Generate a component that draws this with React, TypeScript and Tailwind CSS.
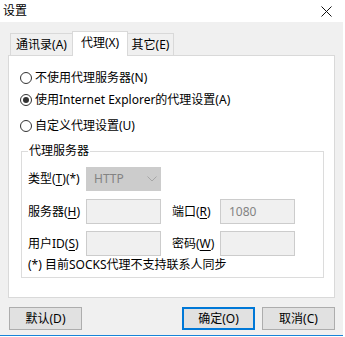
import { ReactNode } from 'react'

// ─── Sub-components ───────────────────────────────────────────────────────────

function Radio({ checked, children }: { checked?: boolean; children: ReactNode }) {
  return (
    <div className="flex items-center h-[16px]">
      <span className="w-[12px] h-[12px] rounded-full border border-[#333333] bg-white flex items-center justify-center shrink-0">
        {checked && <span className="w-[6px] h-[6px] rounded-full bg-[#333333]" />}
      </span>
      <span className="ml-[3px]">{children}</span>
    </div>
  )
}

function Key({ k }: { k: string }) {
  return <span className="underline underline-offset-2">{k}</span>
}

function Field({ value }: { value?: string }) {
  return (
    <div className="w-[75px] h-[25px] shrink-0 border border-[#cccccc] bg-[#f0f0f0] flex items-center pl-[8px] text-[#838383]">
      {value}
    </div>
  )
}

function Button({ primary, children }: { primary?: boolean; children: ReactNode }) {
  return (
    <div
      className={
        primary
          ? 'w-[73px] h-[23px] border-2 border-[#0078d7] bg-[#e1e1e1] flex items-center justify-center'
          : 'w-[73px] h-[23px] border border-[#adadad] bg-[#e1e1e1] flex items-center justify-center'
      }
    >
      {children}
    </div>
  )
}

// ─── App ──────────────────────────────────────────────────────────────────────

export default function App() {
  return (
    <div
      className="w-[345px] h-[337px] bg-white text-[12px] leading-[16px] text-black"
      style={{ fontFamily: '"Noto Sans", "Noto Sans CJK SC", sans-serif' }}
    >
      <div className="w-[343px] h-[336px] bg-[#f0f0f0] border-b border-[#1883d7] flex flex-col">
        {/* title bar */}
        <div className="h-[22px] bg-white flex items-center justify-between pl-[3px] pr-[11px]">
          <span>设置</span>
          <svg width="11" height="11" viewBox="0 0 11 11">
            <path d="M0.5 0.5 L10.5 10.5 M10.5 0.5 L0.5 10.5" stroke="#111111" strokeWidth="1" />
          </svg>
        </div>

        <div className="px-[8px] pt-[9px]">
          {/* tabs */}
          <div className="flex items-end h-[24px] pl-[2px]">
            <div className="w-[62px] h-[22px] border-t border-l border-[#d9d9d9] flex items-center justify-center">
              通讯录(A)
            </div>
            <div className="relative z-10 -mb-px w-[56px] h-[25px] border-x border-t border-[#d9d9d9] bg-white flex items-center justify-center pb-[2px]">
              代理(X)
            </div>
            <div className="w-[46px] h-[22px] border-t border-r border-[#d9d9d9] flex items-center justify-center">
              其它(E)
            </div>
          </div>

          {/* panel */}
          <div className="h-[243px] bg-white border border-[#d9d9d9] pl-[11px] pr-[9px] pt-[14px]">
            <Radio>不使用代理服务器(N)</Radio>
            <div className="mt-[6px]">
              <Radio checked>使用Internet Explorer的代理设置(A)</Radio>
            </div>
            <div className="mt-[10px]">
              <Radio>自定义代理设置(U)</Radio>
            </div>

            <fieldset className="mt-[9px] ml-[1px] w-[303px] border border-[#dcdcdc] px-[6px] pb-[4px]">
              <legend className="px-[1px]">代理服务器</legend>
              <div className="flex flex-col mt-[8px]">
                <div className="flex items-center h-[24px]">
                  <span className="w-[58px] shrink-0">
                    类型(<Key k="T" />)(*)
                  </span>
                  <div className="w-[75px] h-[24px] bg-[#cccccc] flex items-center justify-between pl-[8px] pr-[4px] text-[#838383]">
                    <span>HTTP</span>
                    <svg width="10" height="6" viewBox="0 0 10 6">
                      <path d="M0.5 0.5 L5 5 L9.5 0.5" stroke="#a6a6a6" strokeWidth="1" fill="none" />
                    </svg>
                  </div>
                </div>
                <div className="flex items-center mt-[8px]">
                  <span className="w-[58px] shrink-0">
                    服务器(<Key k="H" />)
                  </span>
                  <Field />
                  <span className="ml-[11px] w-[48px] shrink-0">
                    端口(<Key k="R" />)
                  </span>
                  <Field value="1080" />
                </div>
                <div className="flex items-center mt-[7px]">
                  <span className="w-[58px] shrink-0">
                    用户ID(<Key k="S" />)
                  </span>
                  <Field />
                  <span className="ml-[11px] w-[48px] shrink-0">
                    密码(<Key k="W" />)
                  </span>
                  <Field />
                </div>
                <div className="mt-[1px]">(*) 目前SOCKS代理不支持联系人同步</div>
              </div>
            </fieldset>
          </div>

          {/* buttons */}
          <div className="flex mt-[9px] pl-[1px]">
            <Button>默认(D)</Button>
            <div className="ml-auto flex gap-[7px]">
              <Button primary>确定(O)</Button>
              <Button>取消(C)</Button>
            </div>
          </div>
        </div>
      </div>
    </div>
  )
}
